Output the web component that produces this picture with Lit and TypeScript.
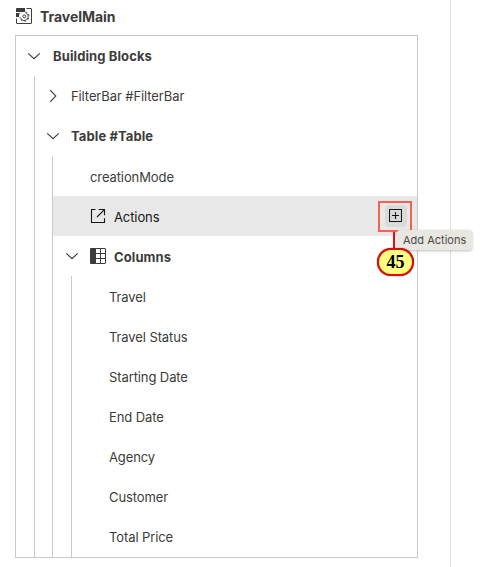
import { LitElement, html, css, svg, nothing } from "lit";
import { customElement, property } from "lit/decorators.js";
import { classMap } from "lit/directives/class-map.js";

const pageIcon = svg`<svg width="16" height="16" viewBox="0 0 16 16" fill="none" stroke="#3c3c3b">
  <path d="M10.500 .5H15a.5.5 0 0 1 .5.5V15a.5.5 0 0 1-.5.5H1a.5.5 0 0 1-.5-.5V10.500"/>
  <path d="M1 0H9V4H0V1a1 1 0 0 1 1-1zM0 5H3.800L3 7.500V9H0z" fill="#3c3c3b" stroke="none"/>
  <path d="M9.500 4.700A4 4 0 1 1 4.300 9.400" stroke-width=".9"/>
  <path d="M9.500 3.900A4.700 4.700 0 1 1 3.700 9.400" stroke-width="1" stroke-dasharray="1.900 1.900"/>
  <circle cx="8.300" cy="8.400" r="1.400" stroke-width="1"/>
</svg>`;

const actionIcon = svg`<svg width="16" height="16" viewBox="0 0 16 16" fill="none" stroke="#161616" stroke-width="1.100">
  <path d="M5.500 1.500H1.500V14.500H14.500V10.300M7 9L14.200 1.800M8.700 1.500H14.500V7.200"/>
</svg>`;

const columnsIcon = svg`<svg width="16" height="16" viewBox="0 0 16 16" fill="none" stroke="#3c3c3b">
  <path d="M1 0H6V16H1a1 1 0 0 1-1-1V1a1 1 0 0 1 1-1z" fill="#3c3c3b" stroke="none"/>
  <path d="M5.500 .5H15a.5.5 0 0 1 .5.5V15a.5.5 0 0 1-.5.5H5.500M10.500 .5V15.500M5.500 5.500H15.500M5.500 10.500H15.500"/>
</svg>`;

const plusIcon = svg`<svg width="13" height="13" viewBox="0 0 13 13" fill="none" stroke="#161616">
  <path d="M.5 .5H12.500V12.500H.5zM6.500 3V10M3 6.500H10" stroke-width="1.100"/>
</svg>`;

@customElement("tree-row")
class TreeRow extends LitElement {
  @property() label = "";
  @property() icon = "";
  @property() chevron = "";
  @property({ type: Boolean }) bold = false;

  static styles = css`
    :host { display: flex; align-items: center; height: 40px; flex: none; box-sizing: border-box; color: #3c3c3b; }
    .chevron { width: 14px; height: 14px; flex: none; margin-right: var(--chevron-gap, 11px); }
    .leaf { width: 13px; flex: none; margin-right: 11px; }
    .icon { display: flex; width: 16px; margin-right: 8px; }
    .label { white-space: nowrap; letter-spacing: -0.1px; line-height: 16px; padding-top: var(--drop, 0px); }
    .bold { font-weight: 700; letter-spacing: 0.1px; }
  `;

  render() {
    const path = this.chevron === "down" ? "M1.200 4.300L7 9.700L12.800 4.300" : "M4.200 1.200L9.800 7L4.200 12.800";
    return html`
      ${this.chevron
        ? html`<svg class="chevron" viewBox="0 0 14 14" fill="none" stroke="#3c3c3b" stroke-width="1.100"><path d=${path}></path></svg>`
        : html`<span class="leaf"></span>`}
      ${this.icon ? html`<span class="icon">${this.icon === "action" ? actionIcon : columnsIcon}</span>` : nothing}
      <span class=${classMap({ label: true, bold: this.bold })}>${this.label}</span>
      <slot></slot>
    `;
  }
}

@customElement("app-root")
class AppRoot extends LitElement {
  static styles = css`
    :host {
      display: flex; width: 480px; height: 567px; overflow: hidden; background: #fff;
      font: 13px/16px Inter, "Liberation Sans", sans-serif; color: #3c3c3b;
    }
    .panel { width: 451px; height: 567px; box-sizing: border-box; border-right: 1px solid #e1e1e1; padding-left: 15px; flex: none; }
    .title { display: flex; align-items: flex-start; height: 35px; box-sizing: border-box; padding: 8px 0 0 1px; gap: 8px; font-size: 14px; font-weight: 700; }
    .title svg { display: block; }
    .title span { line-height: 17px; letter-spacing: -0.05px; }
    .tree { width: 403px; height: 523px; box-sizing: border-box; border: 1px solid #c8c8c8; display: flex; flex-direction: column; }
    .group { display: flex; flex-direction: column; flex: 1; border-left: 1px solid #c8c8c8; }
    .g1 { margin-left: 18px; }
    .g2 { margin-left: 17px; --drop: 1px; }
    .g3 { margin-left: 18px; }
    .root { padding-left: 11px; --chevron-gap: 12px; }
    .g1 > tree-row { padding-left: 11px; }
    .g2 > tree-row { padding-left: 13px; }
    .g2 > .columns { padding-left: 12px; }
    .g3 > tree-row { padding-left: 13px; }
    .selected { background: #e8e8e8; color: #161616; }
    .add {
      position: relative; margin-left: auto; margin-right: 10px; width: 22px; height: 22px; border-radius: 4px;
      background: #dadada; box-sizing: border-box; padding: 4px;
    }
    .add svg { display: block; }
    .frame { position: absolute; left: -7px; top: -4px; width: 34px; height: 31px; box-sizing: border-box; border: 2px solid #f8604f; }
    .stem { position: absolute; left: 8px; top: 27px; width: 2px; height: 18px; background: #f00810; }
    .tooltip {
      position: absolute; left: 12px; top: 25px; width: 75px; height: 20px; box-sizing: border-box; padding-left: 6px;
      background: #e8e7e2; border-radius: 3px; box-shadow: 0 1px 3px #0004;
      font-size: 11px; line-height: 20px; letter-spacing: 0; color: #4a4a48; white-space: nowrap;
    }
    .badge {
      position: absolute; left: -8px; top: 43px; width: 37px; height: 28px; box-sizing: border-box;
      border: 2px solid #e00c0c; border-radius: 14px; background: #ffff80; color: #000;
      font: bold 18px/25px "Liberation Serif", serif; text-align: center; box-shadow: 0 0 1px #400;
    }
  `;

  render() {
    const columns = ["Travel", "Travel Status", "Starting Date", "End Date", "Agency", "Customer", "Total Price"];
    return html`
      <div class="panel">
        <div class="title">${pageIcon}<span>TravelMain</span></div>
        <div class="tree">
          <tree-row class="root" label="Building Blocks" chevron="down" bold></tree-row>
          <div class="group g1">
            <tree-row label="FilterBar #FilterBar" chevron="right"></tree-row>
            <tree-row label="Table #Table" chevron="down" bold></tree-row>
            <div class="group g2">
              <tree-row label="creationMode"></tree-row>
              <tree-row class="selected" label="Actions" icon="action">
                <div class="add">
                  ${plusIcon}
                  <span class="stem"></span>
                  <span class="frame"></span>
                  <span class="tooltip">Add Actions</span>
                  <span class="badge">45</span>
                </div>
              </tree-row>
              <tree-row class="columns" label="Columns" icon="columns" chevron="down" bold></tree-row>
              <div class="group g3">
                ${columns.map((name) => html`<tree-row label=${name}></tree-row>`)}
              </div>
            </div>
          </div>
        </div>
      </div>
    `;
  }
}
